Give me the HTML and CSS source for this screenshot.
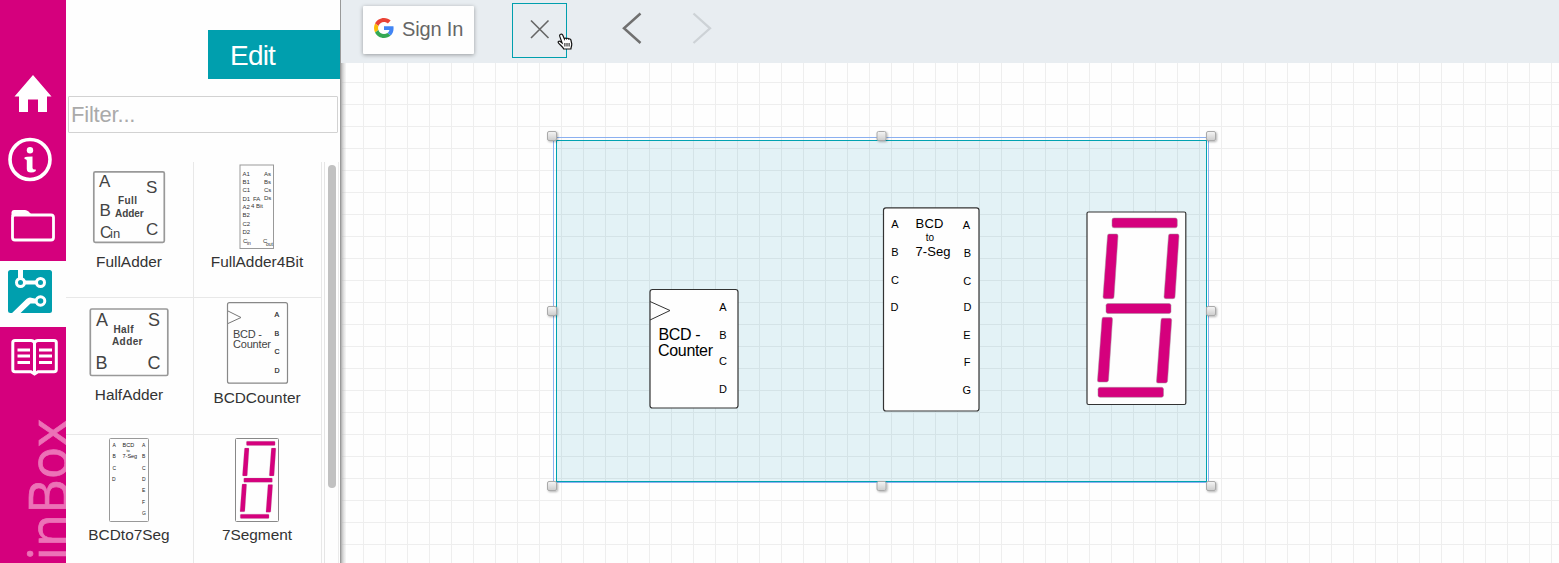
FILE: index.html
```html
<!DOCTYPE html>
<html lang="en">
<head>
<meta charset="utf-8">
<title>BrainBox</title>
<link rel="stylesheet" href="styles.css">
</head>
<body>
<div class="app">
  <nav class="rail">
    <a class="rail-item home"><svg width="66" height="66" viewBox="0 0 66 66"><path fill="#fff" d="M33 15L51.500 36.500H47V52H38V39.500H28V52H19V36.500H14.500Z"/></svg></a>
    <a class="rail-item"><svg width="66" height="66" viewBox="0 -.5 66 66"><circle cx="30" cy="33" r="20" fill="none" stroke="#fff" stroke-width="3.600"/><circle cx="30" cy="23.700" r="3.200" fill="#fff"/><path fill="#fff" d="M24.500 31Q26 30 32.500 30V41.500Q32.700 43.300 35.800 43V44.500Q34 46 31 46Q26.800 46 26.800 42.500V34Q26.700 32.500 24.500 32.500Z"/></svg></a>
    <a class="rail-item"><svg width="66" height="66" viewBox="0 -3 66 66"><rect x="12.500" y="20" width="41" height="25" rx="2.500" fill="none" stroke="#fff" stroke-width="2.800"/><path fill="#fff" d="M11.500 21V17Q12 15 14 15H25Q27 15 28.500 16.500L33 21Z"/></svg></a>
    <a class="rail-item active"><svg width="66" height="66" viewBox="0 0 66 66"><rect x="8" y="9" width="44" height="43" rx="2.500" fill="#009fae"/><g stroke="#fff" fill="none" stroke-width="3"><circle cx="20.500" cy="21.500" r="4"/><circle cx="40.500" cy="21.500" r="4"/><circle cx="40.500" cy="40" r="4.300"/><path stroke-width="4" d="M24 21.500H37"/><path stroke-width="5" d="M20.500 8V17"/></g><path fill="#fff" d="M11 53L26.500 38Q28 36.500 30 36.500L37 38V42.500H30.500L19.500 53Z"/></svg></a>
    <a class="rail-item"><svg width="66" height="66" viewBox="0 0 66 66"><g fill="none" stroke="#fff" stroke-width="3"><path d="M34.500 46V16Q33.500 13.500 31 13.500H15Q12.800 13.500 12.800 15.500V42.500Q12.800 44.800 15 44.800H31L34.500 47L38 44.800H54Q56.300 44.800 56.300 42.500V15.500Q56.300 13.500 54 13.500H38Q35.500 13.500 34.500 16"/><path stroke-width="2.800" d="M17.500 23H30M17.500 29H30M17.500 35.500H30M39 23H52M39 29H52M39 35.500H52"/></g></svg></a>
    <svg class="wordmark" width="66" height="170" viewBox="0 0 66 170"><text transform="translate(67.500 26) rotate(-90)" text-anchor="end">BrainBox</text></svg>
  </nav>

  <aside class="panel">
    <button class="edit">Edit</button>
    <input class="filter" type="text" placeholder="Filter...">
    <div class="library">
      <div class="parts">
        <figure class="part">
          <svg class="h88" width="127" height="88" viewBox="66 162 127 88"><rect x="93.800" y="171.800" width="70.500" height="70.500" rx="1.500" fill="#fefefe" stroke="#999" stroke-width="1.700"/>
            <g font-size="17" fill="#444"><text x="99" y="187">A</text><text x="146" y="193">S</text><text x="99.500" y="216">B</text><text x="146" y="235">C</text><text x="100" y="237.500" font-size="16">C</text><text x="110" y="238" font-size="13">in</text></g><g class="caps"><text x="118" y="204">Full</text><text x="115" y="217" textLength="29">Adder</text></g></svg>
          <figcaption>FullAdder</figcaption>
        </figure>
        <figure class="part">
          <svg class="h88" width="127" height="88" viewBox="194 162 127 88"><rect x="240" y="165" width="33.500" height="83.500" fill="#fefefe" stroke="#999"/>
            <g font-size="6" fill="#333"><text x="242.500" y="176">A1</text><text x="242.500" y="184">B1</text><text x="242.500" y="192">C1</text><text x="242.500" y="200.500">D1</text><text x="242.500" y="208.500">A2</text><text x="242.500" y="217">B2</text><text x="242.500" y="225.500">C2</text><text x="242.500" y="234">D2</text><text x="243" y="243">C</text><text x="247" y="244.500" font-size="5">in</text><text x="264" y="175.500">As</text><text x="264" y="183.500">Bs</text><text x="264" y="192">Cs</text><text x="264" y="200">Ds</text><text x="253" y="201">FA</text><text x="251" y="208">4 Bit</text><text x="263" y="243">C</text><text x="266" y="246" font-size="5">out</text></g></svg>
          <figcaption>FullAdder4Bit</figcaption>
        </figure>
        <figure class="part">
          <svg class="h84" width="127" height="84" viewBox="66 298 127 84"><rect x="90.300" y="309" width="77.500" height="66.500" rx="1.500" fill="#fefefe" stroke="#999" stroke-width="1.700"/>
            <g font-size="18" fill="#444"><text x="96" y="325.500">A</text><text x="148" y="325.500">S</text><text x="95.500" y="368.500">B</text><text x="147.500" y="368.500">C</text></g><g class="caps"><text x="113.500" y="333">Half</text><text x="112" y="344.500">Adder</text></g></svg>
          <figcaption>HalfAdder</figcaption>
        </figure>
        <figure class="part">
          <svg class="h87" width="127" height="87" viewBox="194 298 127 87"><rect x="227.500" y="302.700" width="60" height="80.500" rx="2" fill="#fefefe" stroke="#888" stroke-width="1.200"/><path d="M228 311L241 317.500L228 323.500" fill="none" stroke="#777"/>
            <g fill="#444" font-size="11"><text x="233" y="337.500" textLength="29">BCD -</text><text x="233" y="348" textLength="38">Counter</text></g><g font-size="7" fill="#222" stroke="#222" stroke-width=".2"><text x="274.500" y="317">A</text><text x="274.500" y="336">B</text><text x="274.500" y="354">C</text><text x="274.500" y="373">D</text></g></svg>
          <figcaption>BCDCounter</figcaption>
        </figure>
        <figure class="part">
          <svg class="h87" width="127" height="87" viewBox="66 435 127 87"><rect x="109.500" y="438.500" width="39" height="83" rx="1" fill="#fefefe" stroke="#999"/>
            <g font-size="5" fill="#222"><text x="112.500" y="446.500">A</text><text x="112.500" y="457.700">B</text><text x="112.500" y="469.500">C</text><text x="112" y="480.500">D</text><text x="142" y="447">A</text><text x="142" y="458">B</text><text x="142" y="469.500">C</text><text x="142" y="480.500">D</text><text x="142" y="492">E</text><text x="142" y="503.500">F</text><text x="142" y="514.500">G</text><text x="122.500" y="446.500" font-size="5.500">BCD</text><text x="126.500" y="452" font-size="4">to</text><text x="122.500" y="458" font-size="5.500">7-Seg</text></g></svg>
          <figcaption>BCDto7Seg</figcaption>
        </figure>
        <figure class="part">
          <svg class="h87" width="127" height="87" viewBox="194 435 127 87"><rect x="235.500" y="438.500" width="43" height="83" rx="1" fill="#fefefe" stroke="#888"/><use href="#segments" transform="translate(-242.200 347.200) scale(.4394 .431)"/></svg>
          <figcaption>7Segment</figcaption>
        </figure>
      </div>
      <div class="scroll"><div class="thumb"></div></div>
    </div>
  </aside>

  <main class="work">
    <header class="toolbar">
      <button class="signin"><svg width="20" height="20" viewBox="0 0 48 48"><path fill="#ea4335" d="M24 9.500c3.540 0 6.710 1.220 9.210 3.600l6.850-6.850C35.900 2.380 30.470 0 24 0 14.620 0 6.510 5.380 2.560 13.220l7.980 6.190C12.430 13.720 17.740 9.500 24 9.500z"/><path fill="#4285f4" d="M46.980 24.550c0-1.570-.15-3.090-.38-4.550H24v9.020h12.940c-.58 2.960-2.260 5.480-4.780 7.180l7.730 6c4.510-4.180 7.090-10.360 7.090-17.650z"/><path fill="#fbbc05" d="M10.530 28.590c-.48-1.450-.76-2.990-.76-4.590s.27-3.140.76-4.590l-7.980-6.190C.92 16.460 0 20.120 0 24c0 3.880.92 7.540 2.560 10.780l7.970-6.190z"/><path fill="#34a853" d="M24 48c6.480 0 11.930-2.130 15.890-5.810l-7.730-6c-2.150 1.450-4.920 2.300-8.160 2.300-6.260 0-11.570-4.220-13.470-9.910l-7.980 6.190C6.510 42.620 14.620 48 24 48z"/></svg><span>Sign In</span></button>
      <button class="tool close"><svg width="53" height="53" viewBox="0 0 53 53"><path d="M18 16.500L35.500 34M35.500 16.500L18 34" fill="none" stroke="#666" stroke-width="1.600"/></svg>
        <svg class="cursor" width="17" height="18" viewBox="0 0 17 18"><path d="M3.600 1.300C4.600.8 5.400 1.400 5.800 2.300L7.400 6C7.600 5 9 4.900 9.500 5.800C10 5 11.300 5 11.700 6.100C12.500 5.500 13.600 6 13.900 7L14.700 10.500C15 12.500 14.100 13.600 13.900 16H6.700C6 13.800 3.500 12.300 1.600 10.100C.5 8.600 1.800 7.600 3.200 8.500L5 9.900L2.700 3.200C2.500 2.300 2.800 1.600 3.600 1.300Z" fill="#fff" stroke="#111" stroke-width="1.200"/><path d="M7.900 10V13.500M10 10V13.500M12.100 10V13.500" stroke="#111"/></svg></button>
      <button class="tool back"><svg width="30" height="40" viewBox="0 0 30 40"><path d="M22.500 5.500L6 20.300L22.500 35" fill="none" stroke="#707070" stroke-width="2.500"/></svg></button>
      <button class="tool next"><svg width="30" height="40" viewBox="0 0 30 40"><path d="M5.500 5.500L22 20.300L5.500 35" fill="none" stroke="#cdd2d6" stroke-width="2.300"/></svg></button>
    </header>
    <div class="canvas">
      <svg class="board" width="1218" height="500" viewBox="341 63 1218 500">
        <defs>
          <pattern id="grid" patternUnits="userSpaceOnUse" x="363" y="82" width="22" height="22"><path d="M.5 0V22M0 .5H22" stroke="#eee" fill="none"/></pattern>
          <linearGradient id="knob" x2="0" y2="1"><stop offset="0" stop-color="#f5f5f5"/><stop offset="1" stop-color="#ccc"/></linearGradient>
          <linearGradient id="edge"><stop offset="0" stop-color="#999" stop-opacity=".75"/><stop offset="1" stop-color="#ccc" stop-opacity=".15"/></linearGradient>
          <filter id="soft" x="-50%" y="-50%" width="200%" height="200%"><feDropShadow dx="1" dy="1" stdDeviation="1" flood-opacity=".3"/></filter>
          <g id="handle"><rect x=".5" y=".5" width="9" height="9" rx="1.500" fill="url(#knob)" stroke="#aaa" filter="url(#soft)"/></g>
          <g id="segments" fill="#d5007d" stroke="#a08c98" stroke-width=".5">
            <rect x="1112" y="218" width="65.300" height="9.800" rx="2"/>
            <rect x="1106" y="303.500" width="65" height="10" rx="2"/>
            <rect x="1098" y="387.300" width="65.500" height="10" rx="2"/>
            <path d="M1109 234H1116.500Q1118 234 1118 236L1114 297Q1114 298.700 1112 298.700H1105Q1103 298.700 1103 297L1107.500 236Q1107.500 234 1109 234Z"/>
            <path d="M1170 234H1177.500Q1179 234 1179 236L1175 297Q1175 298.700 1173 298.700H1166Q1164 298.700 1164 297L1168.500 236Q1168.500 234 1170 234Z"/>
            <path d="M1103.500 317.300H1111Q1112.500 317.300 1112.500 319.300L1108.500 380.300Q1108.300 382 1106.500 382H1099Q1097.300 382 1097.500 380.300L1102 319.300Q1102 317.300 1103.500 317.300Z"/>
            <path d="M1162.500 318.300H1170Q1171.700 318.300 1171.700 320.300L1167.500 381.300Q1167.300 383 1165.500 383H1158Q1156.300 383 1156.500 381.300L1161 320.300Q1161 318.300 1162.500 318.300Z"/>
          </g>
        </defs>
        <rect x="341" y="63" width="1218" height="500" fill="url(#grid)"/>
        <rect x="341" y="63" width="5" height="500" fill="url(#edge)"/>
        <rect x="553.500" y="137.500" width="655" height="345" fill="none" stroke="#8bb0f0"/>
        <rect x="556" y="140" width="651" height="342" fill="#0090b4" fill-opacity=".105"/>
        <rect x="556.500" y="140.500" width="650" height="341" fill="none" stroke="#00a2b1"/>

        <g class="chip"><rect x="650" y="289.500" width="88" height="118.500" rx="2.500"/><path d="M650 301.500L670 310.500L650 320" fill="none"/></g>
        <g font-size="16"><text x="658.500" y="340" textLength="42">BCD -</text><text x="658" y="356" textLength="55">Counter</text></g>
        <g font-size="11" text-anchor="middle"><text x="723" y="310.500">A</text><text x="723" y="338.500">B</text><text x="723" y="365">C</text><text x="723" y="392.500">D</text></g>

        <g class="chip"><rect x="883.500" y="207.800" width="95.500" height="203.200" rx="2.500"/></g>
        <g font-size="11" text-anchor="middle"><text x="895" y="228">A</text><text x="895" y="255.500">B</text><text x="895" y="283.500">C</text><text x="894.500" y="311">D</text><text x="966.300" y="229">A</text><text x="967.300" y="256.500">B</text><text x="967.300" y="284.500">C</text><text x="967.500" y="311">D</text><text x="967" y="338.500">E</text><text x="967" y="366">F</text><text x="966.800" y="393.500">G</text><text x="930" y="241" font-size="10">to</text></g>
        <g font-size="13"><text x="915.500" y="227.500" textLength="28">BCD</text><text x="915.500" y="255.500" textLength="35">7-Seg</text></g>

        <g class="chip"><rect x="1087" y="212" width="98.800" height="192.500" rx="1.500"/></g>
        <use href="#segments"/>

        <use href="#handle" x="547" y="131"/><use href="#handle" x="876.500" y="131"/><use href="#handle" x="1206" y="131"/>
        <use href="#handle" x="547" y="306"/><use href="#handle" x="1206" y="306"/>
        <use href="#handle" x="547" y="481"/><use href="#handle" x="876.500" y="481"/><use href="#handle" x="1206" y="481"/>
      </svg>
    </div>
  </main>
</div>
</body>
</html>
```
FILE: styles.css
```css
* { box-sizing: border-box; }
body { margin: 0; font-family: "Liberation Sans", Arial, sans-serif; background: #fefefe; }
button { border: 0; padding: 0; margin: 0; background: none; font-family: inherit; }
svg { display: block; flex: none; }
.app { display: flex; width: 1559px; height: 563px; overflow: hidden; }

.rail { width: 66px; height: 563px; flex: none; padding-top: 60px; background: #d5007d; overflow: hidden; display: flex; flex-direction: column; }
.rail-item { height: 66px; flex: none; }
.rail-item.active { background: #fefefe; margin-top: 3px; }
.wordmark text { font: 54px "Open Sans", sans-serif; fill: #ec72b7; stroke: #ec72b7; stroke-width: 0.7px; letter-spacing: -0.2px; }

.panel { width: 275px; height: 563px; flex: none; display: flex; flex-direction: column; border-right: 1px solid #999; background: #fefefe; }
.edit { align-self: flex-end; flex: none; width: 132px; height: 49px; margin-top: 30px; padding-left: 22px; padding-top: 3px; background: #009fae; color: #fff; font-size: 28px; letter-spacing: -0.8px; text-align: left; }
.filter { width: 270px; height: 37px; flex: none; margin: 17px 2px 0; padding: 0 2px; border: 1px solid #d2d2d2; border-radius: 1px; background: #fefefe; font: 22px "Liberation Sans", Arial, sans-serif; letter-spacing: -0.2px; }
.filter::placeholder { color: #aaa; opacity: 1; }
.library { display: flex; height: 401px; margin-top: 29px; overflow: hidden; }
.parts { width: 256px; display: grid; grid-template-columns: 128px 128px; grid-template-rows: 136px 137px 137px; flex: none; }
.part { margin: 0; border-right: 1px solid #e8e8e8; border-bottom: 1px solid #e8e8e8; display: flex; flex-direction: column; overflow: hidden; }
.part figcaption { margin-top: 3px; padding-right: 1px; font-size: 15.4px; line-height: 18px; text-align: center; color: #333; }
.part:nth-child(n+3) figcaption { margin-top: 4px; }
.part .caps { font-size: 10px; font-weight: bold; fill: #444; letter-spacing: 0.4px; }
.h88 { height: 88px; }
.h87 { height: 87px; }
.h84 { height: 84px; }
.scroll { width: 15px; margin-left: 2px; padding: 3px 0 0 3px; border-left: 1px solid #e5e5e5; border-right: 1px solid #ebebeb; flex: none; }
.thumb { width: 8px; height: 323px; border-radius: 4px; background: #c1c1c1; }

.work { width: 1218px; flex: none; display: flex; flex-direction: column; }
.toolbar { height: 63px; display: flex; align-items: flex-start; padding-left: 22px; background: #e8edf1; flex: none; }
.signin { width: 111px; height: 48px; margin-top: 6px; padding-left: 11px; display: flex; align-items: center; gap: 8px; border-radius: 1px; background: #fefefe; color: #666; font-size: 20px; letter-spacing: -0.15px; box-shadow: 0 1px 4px rgba(0,0,0,.35); }
.signin svg { margin-top: -4px; }
.signin span { margin-top: -1px; }
.tool { flex: none; }
.close { position: relative; width: 55px; height: 55px; margin: 3px 0 0 38px; border: 1px solid #009fae; }
.cursor { position: absolute; left: 44px; top: 29px; z-index: 2; }
.back { margin: 8px 0 0 51px; }
.next { margin: 8px 0 0 40px; }
.canvas { flex: 1; background: #fefefe; }
.chip { fill: #fefefe; stroke: #333; stroke-width: 1.2; }
.chip path { stroke-width: 1; }
```
